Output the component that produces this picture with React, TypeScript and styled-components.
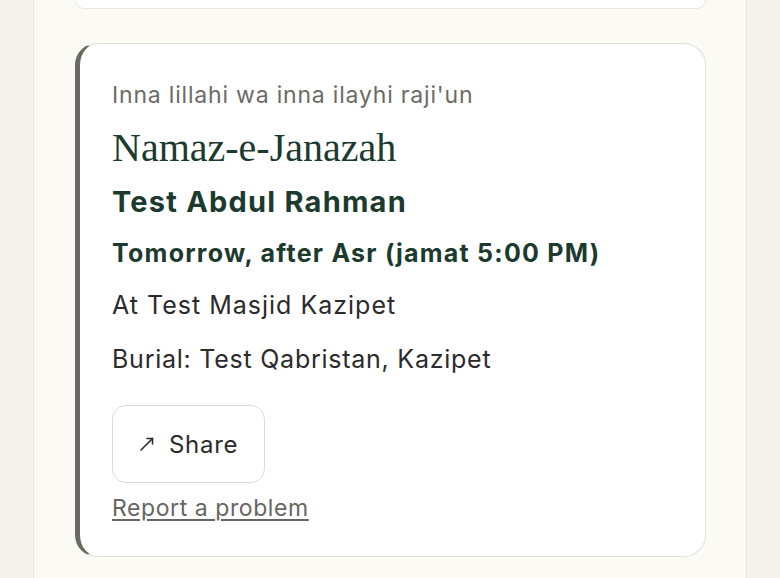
import React from "react";
import styled, { createGlobalStyle } from "styled-components";

const Global = createGlobalStyle`
  html, body { margin: 0; padding: 0; background: #f6f2ec; }
  body { font-family: Inter, "Noto Sans", sans-serif; }
`;

const Column = styled.div`
  box-sizing: border-box;
  width: 714px;
  min-height: 578px;
  margin: 0 auto;
  background: #fcfaf4;
  border-left: 1px solid #eee6d0;
  border-right: 1px solid #eee6d0;
  padding: 0 40px 0 41px;
  display: flex;
  flex-direction: column;
  gap: 34px;
`;

const CardStub = styled.div`
  height: 8px;
  background: #fff;
  border: 1.5px solid #ece8dc;
  border-top: none;
  border-radius: 0 0 20px 20px;
`;

const Card = styled.div`
  background: #fff;
  border: 1.5px solid #e2dfd8;
  border-left: 5px solid #6a6a62;
  border-radius: 22px;
  padding: 35px 32px 33px 32px;
  display: flex;
  flex-direction: column;
  align-items: flex-start;
`;

const Line = styled.div<{ $size: number; $lh: number; $mt?: number; $weight?: number; $color?: string; $ls?: number }>`
  font-size: ${(p) => p.$size}px;
  line-height: ${(p) => p.$lh}px;
  margin-top: ${(p) => p.$mt ?? 0}px;
  font-weight: ${(p) => p.$weight ?? 400};
  letter-spacing: ${(p) => p.$ls ?? 0.035}em;
  color: ${(p) => p.$color ?? "#2b2b2b"};
`;

const Title = styled.h2`
  margin: 12.5px 0 0;
  font-family: "Liberation Serif", "DejaVu Serif", serif;
  font-weight: 400;
  font-size: 40px;
  line-height: 48px;
  color: #1c3a2e;
`;

const ShareButton = styled.button`
  margin-top: 30px;
  box-sizing: border-box;
  height: 78px;
  padding: 0 26px;
  background: #fff;
  border: 1.5px solid #dedbd5;
  border-radius: 14px;
  display: flex;
  align-items: center;
  gap: 14px;
  font-family: Inter, "Noto Sans", sans-serif;
  font-size: 24px;
  letter-spacing: 0.03em;
  color: #2b2b2b;
  cursor: pointer;
`;

const ReportLink = styled.a`
  margin-top: 10px;
  font-size: 23px;
  line-height: 30px;
  letter-spacing: 0.025em;
  color: #666660;
  text-decoration: underline;
  text-underline-offset: 3px;
  cursor: pointer;
`;

const ArrowIcon = () => (
  <svg width="16" height="16" viewBox="0 0 16 16" fill="none" stroke="#2b2b2b" strokeWidth="1.6" strokeLinecap="round" strokeLinejoin="round">
    <line x1="2" y1="14" x2="13.5" y2="2.5" />
    <polyline points="8,2.5 13.5,2.5 13.5,8" />
  </svg>
);

export default function App() {
  return (
    <>
      <Global />
      <Column>
        <CardStub />
        <Card>
          <Line $size={23} $lh={32} $color="#6b6b66">
            Inna lillahi wa inna ilayhi raji'un
          </Line>
          <Title>Namaz-e-Janazah</Title>
          <Line $size={29} $lh={36} $mt={12.5} $weight={700} $ls={0.042} $color="#1c3a2e">
            Test Abdul Rahman
          </Line>
          <Line $size={25} $lh={32} $mt={17} $weight={700} $ls={0.05} $color="#1c3a2e">
            Tomorrow, after Asr (jamat 5:00 PM)
          </Line>
          <Line $size={25} $lh={32} $mt={20} $ls={0.04}>
            At Test Masjid Kazipet
          </Line>
          <Line $size={25} $lh={32} $mt={22} $ls={0.03}>
            Burial: Test Qabristan, Kazipet
          </Line>
          <ShareButton>
            <ArrowIcon />
            Share
          </ShareButton>
          <ReportLink>Report a problem</ReportLink>
        </Card>
      </Column>
    </>
  );
}
